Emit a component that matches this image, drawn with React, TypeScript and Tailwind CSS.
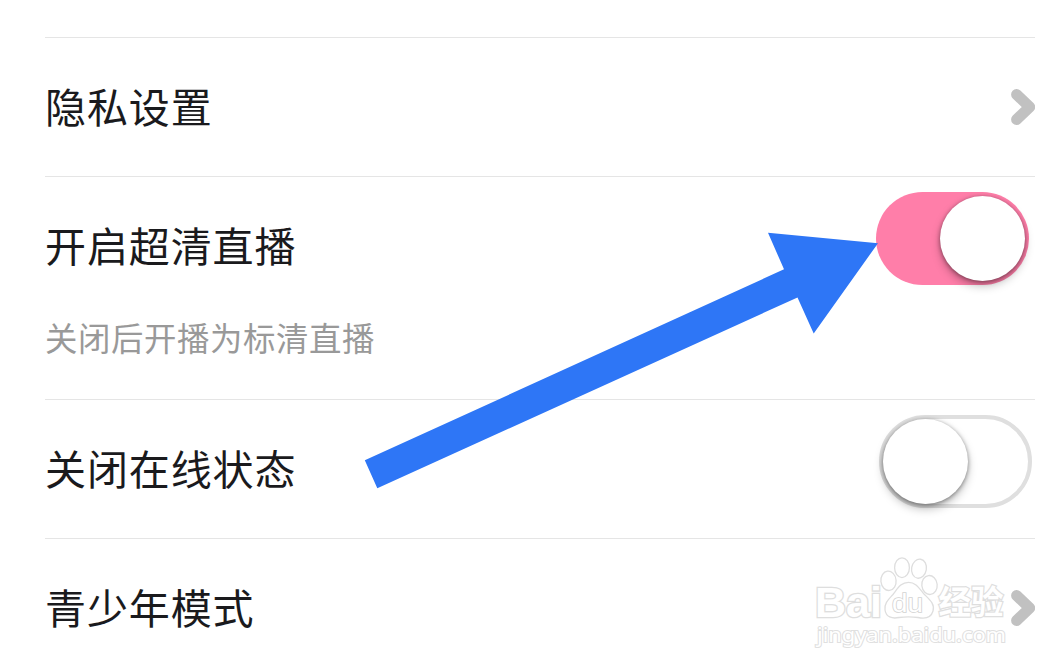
import type { ReactNode } from 'react';

function Chevron() {
  return (
    <svg width="24" height="36" viewBox="0 0 24 36" fill="none" className="shrink-0">
      <path d="M5.6 5.6 L18.7 18 L5.6 30.4" stroke="#c1c1c1" strokeWidth="11" strokeLinecap="round" strokeLinejoin="round" />
    </svg>
  );
}

function Toggle({ on }: { on?: boolean }) {
  return on ? (
    <div className="mt-[15px] mr-1.5 flex h-[93px] w-[153px] shrink-0 justify-end rounded-full bg-[#ff7ea9] p-1">
      <span className="h-[85px] w-[85px] rounded-full bg-white shadow-[0_5px_10px_rgba(0,0,0,0.25),0_1px_4px_rgba(0,0,0,0.4)]" />
    </div>
  ) : (
    <div className="mt-[15px] mr-[3px] flex h-[93px] w-[153px] shrink-0 rounded-full border-4 border-[#dfdfdf]">
      <span className="h-[85px] w-[85px] rounded-full bg-white shadow-[0_5px_10px_rgba(0,0,0,0.25),0_1px_4px_rgba(0,0,0,0.4)]" />
    </div>
  );
}

function Title({ children }: { children: ReactNode }) {
  return <span className="text-[41px] leading-[60px] tracking-[0.9px] text-[#1a1a1d]">{children}</span>;
}

function Watermark() {
  return (
    <svg width="204" height="100" viewBox="810 552 204 100" className="absolute top-[552px] left-[810px]" fill="#fff" stroke="#dedede" strokeWidth="1.3">
      <ellipse cx="888.5" cy="580.8" rx="7.6" ry="9.7" transform="rotate(-6 888.5 580.8)" />
      <ellipse cx="902" cy="567.7" rx="7.4" ry="9.9" />
      <ellipse cx="919" cy="568.7" rx="7.4" ry="9.6" transform="rotate(10 919 568.7)" />
      <ellipse cx="929.5" cy="585" rx="7.7" ry="9.5" transform="rotate(-6 929.5 585)" />
      <path d="M908.5 582.3 C916 582.3 919 588 924 594 C930 600 935 604 933 611 C931 618 925 619 918 617.5 C911 616.5 906 616.5 899 617.5 C892 619 886 617 885 610 C884 603 889 599 893 594.5 C898 588 901 582.3 908.5 582.3 Z" />
      <g className="font-['Liberation_Sans'] font-bold" paintOrder="stroke">
        <text x="815" y="616.5" fontSize="42" textLength="67" lengthAdjust="spacingAndGlyphs" strokeWidth="2.6">Bai</text>
        <text x="892" y="611.5" fontSize="25" textLength="31" lengthAdjust="spacingAndGlyphs" strokeWidth="1.5" stroke="#d2d2d2" className="font-normal">du</text>
      </g>
      <text x="938.5" y="613.5" fontSize="32.5" textLength="65" lengthAdjust="spacingAndGlyphs" paintOrder="stroke" strokeWidth="2.4" className="font-['Noto_Sans_CJK_SC'] font-bold">经验</text>
      <text x="817" y="642" fontSize="20.5" textLength="189" lengthAdjust="spacingAndGlyphs" paintOrder="stroke" strokeWidth="2" stroke="#e0e0e0" className="font-['Noto_Sans'] font-normal">jingyan.baidu.com</text>
    </svg>
  );
}

function Arrow() {
  return (
    <svg width="1064" height="672" viewBox="0 0 1064 672" className="pointer-events-none absolute inset-0">
      <path d="M364.8 460.3 L784 269.3 L768 232.7 L878 243.2 L813.7 333.5 L797.5 297.5 L377.3 488.3 Z" fill="#2e76f6" />
    </svg>
  );
}

export default function App() {
  return (
    <main className="relative h-[672px] w-[1064px] overflow-hidden bg-white pt-[37px] pr-[29px] pl-[45px] font-['Noto_Sans_CJK_SC',sans-serif]">
      <section className="flex h-[139px] items-start justify-between border-t border-[#e5e5e5]">
        <div className="pt-[37px]">
          <Title>隐私设置</Title>
        </div>
        <div className="pt-[51px]">
          <Chevron />
        </div>
      </section>
      <section className="flex h-[223px] items-start justify-between border-t border-[#e5e5e5]">
        <div className="flex flex-col pt-[37px]">
          <Title>开启超清直播</Title>
          <span className="mt-[39px] text-[32.4px] leading-[48px] tracking-[0.6px] text-[#999999]">关闭后开播为标清直播</span>
        </div>
        <Toggle on />
      </section>
      <section className="flex h-[139px] items-start justify-between border-t border-[#e5e5e5]">
        <div className="pt-[37px]">
          <Title>关闭在线状态</Title>
        </div>
        <Toggle />
      </section>
      <section className="flex h-[139px] items-start justify-between border-t border-[#e5e5e5]">
        <div className="pt-[37px]">
          <Title>青少年模式</Title>
        </div>
        <div className="pt-[51px]">
          <Chevron />
        </div>
      </section>
      <Watermark />
      <Arrow />
    </main>
  );
}
